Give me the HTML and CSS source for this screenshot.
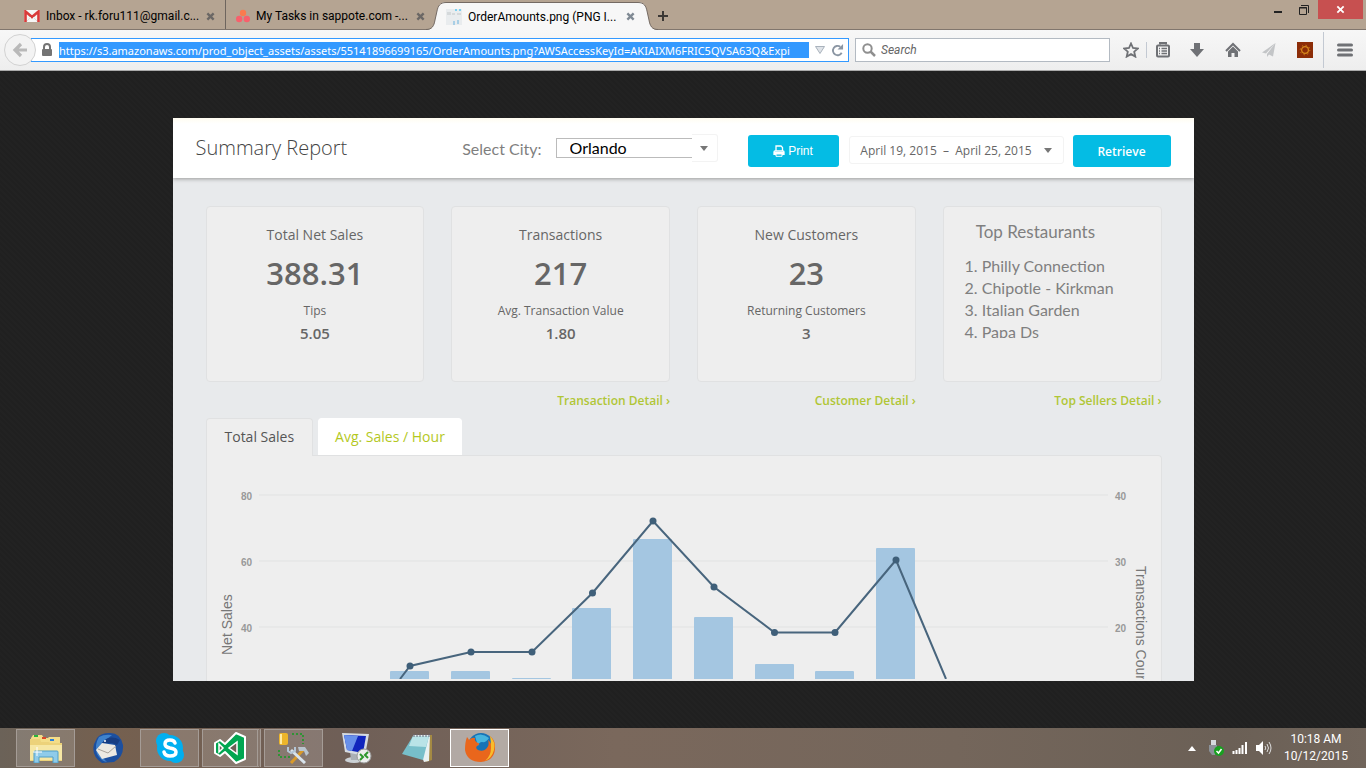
FILE: index.html
```
<!DOCTYPE html>
<html lang="en">
<head>
    <meta charset="UTF-8">
    <meta name="viewport" content="width=device-width, initial-scale=1.0">
    <title>OrderAmounts.png</title>
    <link rel="stylesheet" href="styles.css">
</head>
<body>
    <header class="tabstrip">
        <div class="tab tab-inbox">
            <svg class="favicon" viewBox="0 0 16 12" width="16" height="12"><rect width="16" height="12" rx="1" fill="#f5f5f5"/><path d="M1.5 12V1.5L8 7l6.500-5.500V12" fill="none" stroke="#d93a3a" stroke-width="2.600"/><path d="M3 11l4-4M13 11L9 7" stroke="#ddd"/></svg>
            <span class="tab-title">Inbox - rk.foru111@gmail.c...</span>
            <button class="tab-close" aria-label="Close tab"><svg viewBox="0 0 10 10" width="9" height="9"><path d="M1.500 1.500l7 7M8.500 1.500l-7 7" stroke="#6b6765" stroke-width="2.600"/></svg></button>
        </div>
        <div class="tab tab-tasks">
            <svg class="favicon" viewBox="0 0 14 14" width="14" height="14"><circle cx="7" cy="4" r="3.200" fill="#fb7a4e"/><circle cx="3.200" cy="10" r="3.200" fill="#f8606c"/><circle cx="10.800" cy="10" r="3.200" fill="#f8606c"/></svg>
            <span class="tab-title">My Tasks in sappote.com -...</span>
            <button class="tab-close" aria-label="Close tab"><svg viewBox="0 0 10 10" width="9" height="9"><path d="M1.500 1.500l7 7M8.500 1.500l-7 7" stroke="#6b6765" stroke-width="2.600"/></svg></button>
        </div>
        <div class="tab-active">
            <svg class="curve" viewBox="0 0 20 28" width="20" height="28"><path d="M0 28C6 28 8 24 9 18L11 9C12 4 14 0 20 0V28Z" fill="#f7f7f7"/><path d="M0 27.500C6 27.500 8 24 9 18L11 9C12 4 14 .5 20 .5" fill="none" stroke="#746a63"/></svg>
            <div class="tab-body">
                <svg class="favicon" viewBox="0 0 16 16" width="16" height="16"><rect width="16" height="16" fill="#e9ecee"/><path d="M9 1h2M13 1h2" stroke="#7bd0ef" stroke-width="2"/><path d="M8 12v4M12 11v4" stroke="#a9cfe6" stroke-width="2"/><path d="M1 3h4v3H1zM6 4h3v2H6zM11 4h4v2h-4z" fill="#d5d9db"/></svg>
                <span class="tab-title">OrderAmounts.png (PNG I...</span>
                <button class="tab-close" aria-label="Close tab"><svg viewBox="0 0 10 10" width="9" height="9"><path d="M1.500 1.500l7 7M8.500 1.500l-7 7" stroke="#808a94" stroke-width="2.600"/></svg></button>
            </div>
            <svg class="curve" viewBox="0 0 20 28" width="20" height="28"><path d="M20 28C14 28 12 24 11 18L9 9C8 4 6 0 0 0V28Z" fill="#f7f7f7"/><path d="M20 27.500C14 27.500 12 24 11 18L9 9C8 4 6 .5 0 .5" fill="none" stroke="#746a63"/></svg>
        </div>
        <button class="new-tab" aria-label="New tab"><svg viewBox="0 0 10 10" width="10" height="10"><path d="M5 0v10M0 5h10" stroke="#3c3835" stroke-width="2"/></svg></button>
        <div class="win-controls">
            <button aria-label="Minimize"><svg viewBox="0 0 12 12" width="12" height="12"><path d="M2 8h8" stroke="#222" stroke-width="2"/></svg></button>
            <button aria-label="Restore"><svg viewBox="0 0 12 12" width="12" height="12"><path d="M1.500 3.500h7v7h-7zM1 4h8M3 1.500h7.500V9" fill="none" stroke="#222"/></svg></button>
            <button class="win-close" aria-label="Close"><svg viewBox="0 0 10 10" width="9" height="9"><path d="M1.500 1.500l7 7M8.500 1.500l-7 7" stroke="#fff" stroke-width="2"/></svg></button>
        </div>
    </header>

    <nav class="toolbar">
        <button class="back" aria-label="Back"><svg viewBox="0 0 16 16" width="16" height="16"><path d="M15 8H4M9 2L3 8l6 6" fill="none" stroke="#b9b9b9" stroke-width="3.200"/></svg></button>
        <div class="urlbar">
            <svg viewBox="0 0 12 14" width="12" height="14"><path d="M3 7V4a3 3 0 0 1 6 0v3" fill="none" stroke="#747474" stroke-width="2"/><rect x="1" y="6" width="10" height="7" rx="1" fill="#747474"/></svg>
            <input class="url" type="text" aria-label="Address" value="https://s3.amazonaws.com/prod_object_assets/assets/55141896699165/OrderAmounts.png?AWSAccessKeyId=AKIAIXM6FRIC5QVSA63Q&amp;Expi">
            <svg viewBox="0 0 10 8" width="10" height="8"><path d="M.5 .5h9L5 7.500z" fill="#dfe3e8" stroke="#a9b2bc"/></svg>
            <button aria-label="Reload"><svg viewBox="0 0 14 14" width="13" height="13"><path d="M11.500 9.500A5 5 0 1 1 10 3" fill="none" stroke="#8b96a3" stroke-width="2"/><path d="M13 0v6H7z" fill="#8b96a3"/></svg></button>
        </div>
        <div class="searchbar">
            <svg viewBox="0 0 14 14" width="14" height="14"><circle cx="5.500" cy="5.500" r="4.200" fill="none" stroke="#8f8f8f" stroke-width="2"/><path d="M8.500 8.500l4.500 4.500" stroke="#8f8f8f" stroke-width="2.500"/></svg>
            <input class="search" type="text" aria-label="Search" placeholder="Search">
        </div>
        <div class="tools">
            <button class="tool-star" aria-label="Bookmark"><svg viewBox="0 0 16 16" width="16" height="16"><path d="M8 1.500l2 4.500 4.800.5-3.600 3.200 1.100 4.900L8 12.100l-4.300 2.500 1.100-4.900L1.200 6.500 6 6z" fill="none" stroke="#6f7175" stroke-width="1.800"/></svg></button>
            <button class="tool-list" aria-label="Bookmarks list"><svg viewBox="0 0 16 16" width="16" height="16"><path d="M5 2.500V1h6v1.500" fill="none" stroke="#6f7175" stroke-width="2"/><rect x="2" y="3.500" width="12" height="11" rx="1" fill="none" stroke="#6f7175" stroke-width="2"/><path d="M4 6.500h1M6.500 6.500H12M4 9h1M6.500 9H12M4 11.500h1M6.500 11.500H12" stroke="#6f7175" stroke-width="1.300"/></svg></button>
            <button aria-label="Downloads"><svg viewBox="0 0 16 16" width="16" height="16"><path d="M5 1h6v6h4l-7 8-7-8h4z" fill="#6f7175"/></svg></button>
            <button aria-label="Home"><svg viewBox="0 0 16 16" width="16" height="16"><path d="M1 9l7-7 7 7" fill="none" stroke="#6f7175" stroke-width="2"/><path d="M3 9.500l5-5 5 5V15H9.500v-4h-3v4H3z" fill="#6f7175"/></svg></button>
            <button aria-label="Share"><svg viewBox="0 0 16 16" width="16" height="16"><path d="M14.500 1L1 10.500l4 1zM14.500 1L6 12v3l2-2.500 4 2z" fill="#c3c5c7"/></svg></button>
            <button class="tool-addon" aria-label="Add-on"><svg viewBox="0 0 16 16" width="16" height="16"><rect width="16" height="16" fill="#8c2d08"/><circle cx="8" cy="8" r="3.400" fill="none" stroke="#d8891c" stroke-width="1.200"/><circle cx="8" cy="8" r="4.800" fill="none" stroke="#d8891c" stroke-dasharray="1.200 2.560"/></svg></button>
            <button class="tool-menu" aria-label="Menu"><svg viewBox="0 0 16 14" width="16" height="14"><path d="M1.500 2h13M1.500 7h13M1.500 12h13" stroke="#6f7175" stroke-width="3" stroke-linecap="round"/></svg></button>
        </div>
    </nav>

    <main class="viewer">
        <section class="report">
            <div class="report-head">
                <h1>Summary Report</h1>
                <div class="city">
                    <label for="city">Select City:</label>
                    <select id="city"><option>Orlando</option></select>
                    <span class="city-arrow"><i class="caret"></i></span>
                </div>
                <button class="btn btn-print"><svg viewBox="0 0 12 12" width="12" height="12"><path d="M3 6V1h5l1.500 1.500V6M1 10V7q0-1 1-1h8q1 0 1 1v3" fill="none" stroke="#fff" stroke-width="1.300"/><path d="M1 7h10v3H1z" fill="#fff"/><path d="M3 9h6v2.300H3z" fill="#04bce4" stroke="#fff"/></svg>Print</button>
                <button class="dates">April 19, 2015 &nbsp;– &nbsp;April 25, 2015 <i class="caret"></i></button>
                <button class="btn btn-retrieve">Retrieve</button>
            </div>
            <div class="report-body">
                <div class="cards">
                    <div class="col">
                        <div class="card">
                            <h2>Total Net Sales</h2>
                            <p class="big">388.31</p>
                            <p class="small">Tips</p>
                            <p class="value">5.05</p>
                        </div>
                    </div>
                    <div class="col">
                        <div class="card">
                            <h2>Transactions</h2>
                            <p class="big">217</p>
                            <p class="small">Avg. Transaction Value</p>
                            <p class="value">1.80</p>
                        </div>
                        <a href="#">Transaction Detail ›</a>
                    </div>
                    <div class="col">
                        <div class="card">
                            <h2>New Customers</h2>
                            <p class="big">23</p>
                            <p class="small">Returning Customers</p>
                            <p class="value">3</p>
                        </div>
                        <a href="#">Customer Detail ›</a>
                    </div>
                    <div class="col">
                        <div class="card card-top">
                            <h2>Top Restaurants</h2>
                            <ol>
                                <li>Philly Connection</li>
                                <li>Chipotle - Kirkman</li>
                                <li>Italian Garden</li>
                                <li>Papa Ds</li>
                            </ol>
                        </div>
                        <a href="#">Top Sellers Detail ›</a>
                    </div>
                </div>
                <div class="chart-tabs">
                    <button class="chart-tab selected">Total Sales</button>
                    <button class="chart-tab">Avg. Sales / Hour</button>
                </div>
                <div class="chart">
                    <svg viewBox="0 0 954 223">
                        <path class="grid" d="M52 39H901M52 105H901M52 171H901"/>
                        <g class="bars">
                            <rect x="183" y="215" width="39" height="20" rx="1"/>
                            <rect x="244" y="215" width="39" height="20" rx="1"/>
                            <rect x="305" y="222" width="39" height="20" rx="1"/>
                            <rect x="365" y="152" width="39" height="80" rx="1"/>
                            <rect x="426" y="83" width="39" height="150" rx="1"/>
                            <rect x="487" y="161" width="39" height="80" rx="1"/>
                            <rect x="548" y="208" width="39" height="20" rx="1"/>
                            <rect x="608" y="215" width="39" height="20" rx="1"/>
                            <rect x="669" y="92" width="39" height="150" rx="1"/>
                        </g>
                        <polyline class="line" points="193,223 203,210 264,196 325,196 385.500,137 446,65 507,131 567.500,176.500 628,176.500 689,104 739,223"/>
                        <g class="dots">
                            <circle cx="203" cy="210" r="3.500"/>
                            <circle cx="264" cy="196" r="3.500"/>
                            <circle cx="325" cy="196" r="3.500"/>
                            <circle cx="385.500" cy="137" r="3.500"/>
                            <circle cx="446" cy="65" r="3.500"/>
                            <circle cx="507" cy="131" r="3.500"/>
                            <circle cx="567.500" cy="176.500" r="3.500"/>
                            <circle cx="628" cy="176.500" r="3.500"/>
                            <circle cx="689" cy="104" r="3.500"/>
                        </g>
                        <g class="ticks">
                            <text x="34" y="44">80</text>
                            <text x="34" y="110">60</text>
                            <text x="34" y="176">40</text>
                            <text x="908" y="44">40</text>
                            <text x="908" y="110">30</text>
                            <text x="908" y="176">20</text>
                        </g>
                        <g class="axis">
                            <text transform="translate(25 199) rotate(-90)">Net Sales</text>
                            <text transform="translate(929 110) rotate(90)">Transactions Count</text>
                        </g>
                    </svg>
                </div>
            </div>
        </section>
    </main>

    <footer class="taskbar">
        <button class="task open" aria-label="File Explorer"><svg viewBox="0 0 34 30" width="34" height="30"><path d="M2 5l2-3h9l2 3h4l1-1h11v6H2z" fill="#f3dd88"/><path d="M5 2h4v2H5z" fill="#28b43c"/><path d="M13 4h4v2h-4z" fill="#d94a2a"/><path d="M21 6h4v2h-4z" fill="#2c82d8"/><path d="M1 6h10l1 3h8l1 1h12v18H1z" fill="#ecd27a"/><path d="M1 12h32v15H1z" fill="#f6e7a4"/><path d="M5 19q0-1 1-1h22q1 0 1 1v11h-5v-6H10v6H5z" fill="#8fcbea" stroke="#4f9ec8"/><path d="M8 14v9M4 19h9" stroke="#fff"/></svg></button>
        <button class="task" aria-label="Thunderbird"><svg viewBox="0 0 32 32" width="32" height="32"><path d="M17 1q11-1 14 12 1 12-9 17l-12 1Q-1 24 2 12L5 6Q9 1 17 1z" fill="#1c4f9f"/><path d="M7 5Q2 13 5 22q4 7 10 8Q4 20 10 11L20 3Q12 2 7 5z" fill="#3f82cc"/><path d="M4 18l6-7 13 2 2 10-15 4z" fill="#ece9e3"/><path d="M6 17l10 4 8-7" fill="none" stroke="#a9a39b"/><path d="M10 11Q17 2 28 8l-3 5-5-2z" fill="#173d83"/><circle cx="13" cy="9" r="1" fill="#fff"/></svg></button>
        <button class="task open" aria-label="Skype"><svg viewBox="0 0 30 30" width="30" height="30"><circle cx="15" cy="15" r="13" fill="#00aff0"/><circle cx="9" cy="8" r="8" fill="#00aff0"/><circle cx="21" cy="22" r="8" fill="#00aff0"/><path d="M20 10q-1-3-5-3-5 0-5 4 0 3 5 4 6 1 6 4 0 4-6 4-5 0-6-4" fill="none" stroke="#fff" stroke-width="3.500" stroke-linecap="round"/></svg></button>
        <button class="task open stacked" aria-label="Visual Studio"><svg viewBox="0 0 32 32" width="32" height="32"><path d="M22 1l9 4v22l-9 4-11-11-5 4-5-3V11l5-3 5 4z" fill="#00a651" stroke="#fff" stroke-width="2" stroke-linejoin="round"/><path d="M23 10v12l-8-6zM5 12l4 4-4 4z" fill="#6e5f57" stroke="#fff" stroke-width="1.500"/></svg></button>
        <button class="task open" aria-label="Database tools"><svg viewBox="0 0 32 32" width="32" height="32"><rect x="1" y="1" width="9" height="12" rx="2" fill="#ecb52a"/><path d="M3 2v10" stroke="#ffeaa0" stroke-width="2"/><path d="M14 2h11v10M1 18v7h11" fill="none" stroke="#159b22" stroke-width="1.500" stroke-dasharray="2 2"/><path d="M13 31l13-14" stroke="#d99a2a" stroke-width="3"/><path d="M20 15h7l4 6-3 3-2-5h-5z" fill="#b9c4ce"/><path d="M13 18l14 13" stroke="#d8e3ec" stroke-width="3"/><path d="M10 15v4l3 2 4-2v-4" fill="none" stroke="#b4c6d6" stroke-width="2"/></svg></button>
        <button class="task" aria-label="Remote Desktop"><svg viewBox="0 0 32 32" width="32" height="32"><ellipse cx="14" cy="28" rx="9" ry="3" fill="#ccd1d5"/><path d="M10 20h9v8h-8z" fill="#aab0b5"/><path d="M2 1l27 1-4 22L5 20z" fill="#d5dbe2"/><path d="M4 3l22 1-3 17L7 18z" fill="#1025bd"/><path d="M4 3l14 1-6 15-5-1z" fill="#6790ea"/><circle cx="24" cy="24" r="7" fill="#eceeed" stroke="#999"/><path d="M20 22l3 3-3 3M28 20l-3 3 3 3" fill="none" stroke="#2c972c" stroke-width="2"/></svg></button>
        <button class="task" aria-label="Notepad"><svg viewBox="0 0 32 32" width="32" height="32"><path d="M12 3h18v25l-6 2z" fill="#a48a43"/><path d="M11 3h17l-1 26-5 1z" fill="#e9f1f2"/><path d="M11 4h16l-6 24-21-6z" fill="#77bfca"/><path d="M11 4h16l-3 11-17-1z" fill="#b9e3e7"/><path d="M12 2v3M15 2v3M18 2v3M21 2v3M24 2v3M27 2v3" stroke="#667"/></svg></button>
        <button class="task open current" aria-label="Firefox"><svg viewBox="0 0 32 32" width="32" height="32"><circle cx="17" cy="14" r="13" fill="#1773b6"/><path d="M11 4q7-4 14 2-3 5-7 4-3 0-4 4z" fill="#47b4dd"/><path d="M3 5q1 1 2 3 3-3 6-2-1 3 3 5 3 1-1 3-2 2 1 4 5 2 8-1 4-4 2-9 3 2 4 7 1-6-2-11 6 5 5 13-1 12-14 13Q3 30 1 18 1 10 3 5z" fill="#e9661c"/><path d="M26 4q6 6 4 14-2 8-9 11 6-5 6-13 0-7-1-12z" fill="#f8bd2c"/></svg></button>
        <div class="tray">
            <svg class="tray-up" viewBox="0 0 8 5" width="8" height="5"><path d="M0 5l4-5 4 5z" fill="#fff"/></svg>
            <svg class="tray-usb" viewBox="0 0 16 16" width="16" height="16"><path d="M3 0h5v5H3z" fill="#d5dade"/><path d="M1 5h8v6l-2 4H4l-3-4z" fill="#8b9299"/><circle cx="11" cy="11" r="5" fill="#18a020"/><path d="M8.500 11l2 2 3-4" fill="none" stroke="#fff" stroke-width="1.500"/></svg>
            <svg class="tray-net" viewBox="0 0 16 12" width="16" height="12"><path d="M1.500 9v3M4.500 8v4M7.500 6v6M10.500 3v9M14 0v12" stroke="#fff" stroke-width="2"/></svg>
            <svg class="tray-vol" viewBox="0 0 16 14" width="16" height="14"><path d="M0 4h3l4-4v14L3 10H0z" fill="#fff"/><path d="M9 5q1.500 2 0 4M11 3q3 4 0 8M13 1q4 6 0 12" fill="none" stroke="#ddd"/></svg>
            <div class="clock"><time>10:18 AM</time><time>10/12/2015</time></div>
        </div>
    </footer>
</body>
</html>
```
FILE: styles.css
```
*{
    box-sizing: border-box;
}
body{
    margin: 0;
    min-height: 100vh;
    display: flex;
    flex-direction: column;
    background-color: #222;
    font-family: Roboto, "Noto Sans", sans-serif;
    font-size: 12px;
}
button{
    margin: 0;
    padding: 0;
    border: 0;
    background: none;
    font-family: inherit;
    display: flex;
    align-items: center;
    justify-content: center;
}
svg{
    display: block;
    flex-shrink: 0;
}
h1, h2, p, ol{
    margin: 0;
    padding: 0;
    font-weight: normal;
}

/* browser tabs */
.tabstrip{
    display: flex;
    height: 30px;
    background-color: #b5a492;
    border-bottom: 1px solid #81766d;
}
.tab, .tab-body{
    display: flex;
    align-items: center;
    color: #000;
}
.tab{
    padding-top: 3px;
}
.tab-inbox{
    width: 226px;
    padding-left: 24px;
    padding-right: 10px;
    border-right: 1px solid #6e655e;
}
.tab-tasks{
    width: 200px;
    padding-left: 10px;
    padding-right: 1px;
}
.tab-title{
    flex: 1;
    margin-left: 6px;
    white-space: nowrap;
}
.tab-close{
    width: 9px;
}
.tab-active{
    display: flex;
    align-self: flex-end;
    height: 28px;
    margin-bottom: -1px;
}
.tab-body{
    width: 192px;
    padding-right: 3px;
    background-color: #f7f7f7;
    border-top: 1px solid #746a63;
}
.new-tab{
    width: 10px;
    margin-top: 3px;
}
.win-controls{
    display: flex;
    margin-left: auto;
    margin-right: 3px;
    height: 19px;
}
.win-controls button{
    width: 26px;
}
.win-controls .win-close{
    width: 45px;
    margin-left: 1px;
    background-color: #c75050;
}

/* address bar row */
.toolbar{
    display: flex;
    align-items: center;
    height: 41px;
    background: linear-gradient(#f7f7f7, #eee);
    border-bottom: 1px solid #aaa;
}
.back{
    position: relative;
    width: 32px;
    height: 32px;
    margin-left: 4px;
    margin-right: -5px;
    border: 1px solid #d2d2d2;
    border-radius: 50%;
    background-color: #f3f3f3;
}
.urlbar, .searchbar{
    display: flex;
    align-items: center;
    height: 24px;
    background-color: #fff;
}
.urlbar{
    flex: 1;
    min-width: 0;
    gap: 6px;
    padding-left: 9px;
    padding-right: 4px;
    border: 1px solid #3399ff;
}
input{
    flex: 1;
    min-width: 0;
    height: 16px;
    padding: 0;
    border: 0;
    outline: 0;
    background: none;
    font-family: inherit;
    font-size: 12px;
}
.url{
    background-color: #3399ff;
    color: #fff;
    font-family: "Noto Sans", sans-serif;
    font-size: 11px;
}
.searchbar{
    width: 255px;
    margin-left: 6px;
    margin-right: 6px;
    padding-left: 6px;
    gap: 5px;
    border: 1px solid #b3bac2;
}
.search::placeholder{
    color: #666;
    font-style: italic;
}
.tools{
    display: flex;
    align-items: center;
}
.tools button{
    width: 36px;
    height: 16px;
}
.tools .tool-star{
    width: 31px;
    border-right: 1px solid #c3c9d2;
}
.tools .tool-list{
    width: 32px;
}
.tools .tool-menu{
    width: 43px;
    height: 36px;
    border-left: 1px solid #c3c9d2;
}

/* picture area */
.viewer{
    flex: 1;
    display: flex;
    align-items: center;
    justify-content: center;
    background: repeating-linear-gradient(45deg, #222 0, #222 2px, #202020 2px, #202020 4px);
}
.report{
    width: 100%;
    max-width: 1021px;
    background-color: #e8eaec;
    font-family: "Open Sans", sans-serif;
    color: #666;
    overflow: hidden;
}
.report-head{
    position: relative;
    display: flex;
    align-items: center;
    height: 60px;
    padding: 0 23px;
    background: linear-gradient(#fffcf0, #fff 6px);
    box-shadow: 0 1px 4px #999;
}
.report-head h1{
    flex: 1;
    padding-bottom: 2px;
    font-size: 20px;
    font-weight: 300;
    color: #444;
}
.city{
    display: flex;
    align-items: center;
    margin-right: 30px;
    font-family: Lato, sans-serif;
    font-size: 16px;
}
.city label{
    margin-right: 14px;
    color: #7f7f7f;
}
.city select{
    appearance: none;
    width: 136px;
    height: 20px;
    padding: 0 13px;
    border: 1px solid #bbb;
    border-right: 0;
    border-radius: 0;
    background-color: #fff;
    color: #000;
    font-family: inherit;
    font-size: 16px;
    line-height: 18px;
}
.city-arrow{
    display: flex;
    align-items: center;
    justify-content: center;
    width: 26px;
    height: 28px;
    border: 1px solid #f3f3f3;
    border-left: 0;
    border-radius: 0 3px 3px 0;
}
.caret{
    border: 4px solid transparent;
    border-top: 5px solid #777;
    border-bottom: 0;
}
.btn{
    height: 32px;
    margin-top: 6px;
    border-radius: 3px;
    background-color: #04bce4;
    color: #fff;
    font-size: 12px;
}
.btn-print{
    width: 91px;
    gap: 3px;
    font-family: "Liberation Sans", Arial, sans-serif;
}
.btn-retrieve{
    width: 98px;
    font-weight: 600;
}
.dates{
    width: 215px;
    height: 28px;
    margin: 4px 9px 0 10px;
    gap: 12px;
    border: 1px solid #f3f3f3;
    border-radius: 3px;
    color: #666;
    font-size: 12px;
    white-space: nowrap;
}
.report-body{
    padding: 28px 32px 0 33px;
}
.cards{
    display: grid;
    grid-template-columns: repeat(4, 1fr);
    gap: 27px;
}
.card{
    height: 176px;
    padding-top: 17px;
    border: 1px solid #e0e1e2;
    border-radius: 4px;
    background-color: #eee;
    text-align: center;
    line-height: 22px;
}
.card h2{
    font-size: 14px;
}
.big{
    font-size: 31px;
    font-weight: 600;
    line-height: 54px;
}
.small{
    font-size: 12px;
}
.value{
    font-size: 15px;
    font-weight: 600;
}
.col a{
    display: block;
    margin-top: 9px;
    text-align: right;
    line-height: 20px;
    font-size: 12px;
    font-weight: 600;
    color: #b0c636;
    text-decoration: none;
}
.card-top{
    padding-top: 14px;
    padding-left: 20px;
    text-align: left;
    font-family: Lato, sans-serif;
    font-size: 16px;
    color: #7f7f7f;
}
.card-top h2{
    font-size: 17px;
    margin-left: 12px;
}
.card-top ol{
    height: 83px;
    margin-top: 12px;
    padding-left: 18px;
    overflow: hidden;
}
.chart-tabs{
    display: flex;
    gap: 5px;
    margin-top: 7px;
}
.chart-tab{
    height: 37px;
    padding: 0 16px 2px;
    border-radius: 4px 4px 0 0;
    border: 1px solid #fff;
    border-bottom: 0;
    background-color: #fff;
    color: #b4c81e;
    font-size: 14px;
}
.chart-tab.selected{
    position: relative;
    height: 38px;
    margin-bottom: -1px;
    padding: 0 18px 2px;
    border-color: #e0e1e2;
    background-color: #eee;
    color: #555;
}
.chart{
    padding-bottom: 2px;
    border: 1px solid #e0e1e2;
    border-bottom: 0;
    border-radius: 0 4px 0 0;
    background-color: #eee;
}
.chart svg{
    width: 100%;
    overflow: hidden;
}
.grid{
    stroke: #e1e2e2;
    stroke-width: 1;
}
.bars{
    fill: #a4c6e1;
}
.line{
    fill: none;
    stroke: #48657d;
    stroke-width: 2;
}
.dots{
    fill: #3f5f79;
}
.ticks{
    font-family: "Liberation Sans", Arial, sans-serif;
    font-size: 10px;
    font-weight: bold;
    fill: #999;
}
.axis{
    font-family: "Liberation Sans", Arial, sans-serif;
    font-size: 14px;
    fill: #777;
}

/* windows taskbar */
.taskbar{
    display: flex;
    align-items: center;
    height: 40px;
    gap: 3px;
    padding-left: 16px;
    background: linear-gradient(90deg, #6b6258, #75604f 8%, #6f5f57 25%, #7a685c 45%, #74665b 70%, #6b6056 90%, #71655b);
}
.task{
    width: 59px;
    height: 38px;
    border: 1px solid transparent;
}
.open{
    border-color: #a59c96;
    background-color: rgba(255, 255, 255, 0.16);
}
.stacked{
    border-right: 4px double #a59c96;
}
.current{
    border-color: #fff;
    background-color: rgba(255, 255, 255, 0.45);
}
.tray{
    display: flex;
    align-items: center;
    margin-left: auto;
    padding-right: 14px;
    color: #fff;
}
.tray-up{
    margin-right: 12px;
}
.tray-usb, .tray-net{
    margin-right: 8px;
}
.tray-vol{
    margin-right: 8px;
}
.clock{
    display: flex;
    flex-direction: column;
    align-items: center;
    width: 72px;
    line-height: 17px;
}
```
